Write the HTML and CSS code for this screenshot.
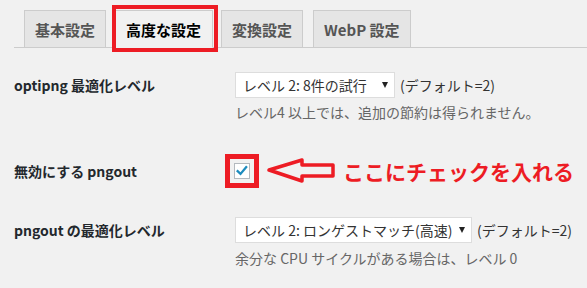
FILE: index.html
```html
<!DOCTYPE html>
<html lang="ja">
<head>
<meta charset="utf-8">
<title>設定</title>
<link rel="stylesheet" href="styles.css">
</head>
<body>
<nav class="tabs">
  <span class="tab">基本設定</span>
  <span class="tab active">高度な設定<span class="mark"></span></span>
  <span class="tab">変換設定</span>
  <span class="tab tab-last">WebP 設定</span>
</nav>
<div class="form">
  <div class="row row-1">
    <div class="label">optipng 最適化レベル</div>
    <div class="field">
      <div class="line">
        <div class="select s1"><span class="val">レベル 2: 8件の試行</span><span class="arrow"></span></div>
        <span class="def">(デフォルト=2)</span>
      </div>
      <p class="desc">レベル4 以上では、追加の節約は得られません。</p>
    </div>
  </div>
  <div class="row row-2">
    <div class="label">無効にする pngout</div>
    <div class="field">
      <div class="line">
        <span class="frame"><span class="checkbox"><svg viewBox="0 0 16 16" width="14" height="14"><path d="M3 8.2 L6.3 11.3 L12.8 3.6" fill="none" stroke="#1e8cbe" stroke-width="2.6" stroke-linecap="square"/></svg></span></span>
        <svg class="pointer" width="72" height="26" viewBox="0 0 72 26"><path d="M4 12 L37 2 L37 7 L68 7 L68 18 L37 18 L37 23 Z" fill="none" stroke="#ed1c24" stroke-width="3.5" stroke-linejoin="round"/></svg>
        <span class="note">ここにチェックを入れる</span>
      </div>
    </div>
  </div>
  <div class="row row-3">
    <div class="label">pngout の最適化レベル</div>
    <div class="field">
      <div class="line">
        <div class="select s2"><span class="val">レベル 2: ロンゲストマッチ(高速)</span><span class="arrow"></span></div>
        <span class="def">(デフォルト=2)</span>
      </div>
      <p class="desc">余分な CPU サイクルがある場合は、レベル 0</p>
    </div>
  </div>
</div>
</body>
</html>
```
FILE: styles.css
```css
html, body {
  margin: 0;
  padding: 0;
  background: #f1f1f1;
  font-family: "Noto Sans", "Noto Sans CJK JP", sans-serif;
  color: #444;
  overflow: hidden;
}
.tabs {
  display: flex;
  align-items: flex-end;
  margin: 10px 0 0 14px;
  padding-left: 10px;
  border-bottom: 1px solid #ccc;
  height: 37px;
}
.tab {
  position: relative;
  box-sizing: border-box;
  height: 38px;
  margin-bottom: -1px;
  padding: 0 10px;
  margin-right: 8px;
  border: 1px solid #ccc;
  background: #e5e5e5;
  color: #555;
  font-family: "Noto Sans CJK JP", sans-serif;
  font-size: 15px;
  font-weight: 700;
  line-height: 38px;
  text-align: center;
}
.tab.active {
  background: #f1f1f1;
  border-bottom-color: #f1f1f1;
  color: #000;
  padding: 0 11px;
}
.tab-last {
  margin-left: 2px;
}
.mark {
  position: absolute;
  left: -3px;
  top: -6px;
  width: 106px;
  height: 47px;
  box-sizing: border-box;
  border: 4px solid #ed1c24;
}
.form {
  padding: 0 0 0 14px;
}
.row {
  display: grid;
  grid-template-columns: 221px 1fr;
}
.row-1 { margin-top: 24px; }
.row-2 { margin-top: 41px; }
.row-3 { margin-top: 38px; }
.label {
  font-family: "Noto Sans CJK JP", sans-serif;
  font-size: 14px;
  font-weight: 700;
  color: #23282d;
  line-height: 26px;
}
.row-2 .label { line-height: 16px; }
.line {
  display: flex;
  align-items: center;
  height: 26px;
}
.row-2 .line { height: 16px; }
.select {
  box-sizing: border-box;
  height: 26px;
  display: flex;
  align-items: center;
  justify-content: space-between;
  background: #fff;
  border: 1px solid #ddd;
  padding: 0 6px 0 7px;
  font-family: "Noto Sans CJK JP", sans-serif;
  font-size: 14px;
  color: #333;
  white-space: nowrap;
}
.s1 { width: 160px; }
.s2 { width: 237px; }
.val { overflow: hidden; }
.arrow {
  flex: none;
  width: 0;
  height: 0;
  margin-left: 4px;
  border-left: 3.5px solid transparent;
  border-right: 3.5px solid transparent;
  border-top: 6px solid #222;
}
.def {
  margin-left: 5px;
  font-family: "Noto Sans CJK JP", sans-serif;
  font-size: 14px;
  color: #333;
}
.desc {
  margin: 4px 0 0;
  font-family: "Noto Sans CJK JP", sans-serif;
  font-size: 14px;
  line-height: 20px;
  color: #666;
}
.row-3 .desc { margin-top: 5px; }
.frame {
  flex: none;
  margin-left: -10px;
  box-sizing: border-box;
  width: 34px;
  height: 34px;
  border: 5px solid #ed1c24;
  display: flex;
  align-items: center;
  justify-content: center;
}
.checkbox {
  box-sizing: border-box;
  width: 16px;
  height: 16px;
  border: 1px solid #b4b9be;
  background: #fff;
  display: flex;
  align-items: center;
  justify-content: center;
}
.pointer {
  flex: none;
  margin-left: 6px;
}
.note {
  flex: none;
  margin-left: 6px;
  font-family: "Noto Sans CJK JP", sans-serif;
  font-size: 21px;
  font-weight: 700;
  color: #ed1c24;
  line-height: 26px;
}
```
